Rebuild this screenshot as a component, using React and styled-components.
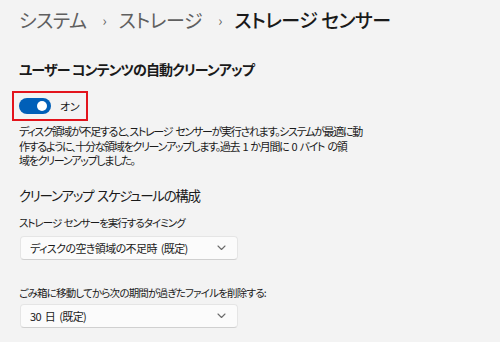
import React from "react";
import styled, { createGlobalStyle } from "styled-components";

const GlobalStyle = createGlobalStyle`
  html, body {
    margin: 0;
    padding: 0;
    background: #f3f3f3;
  }
  body {
    font-family: "Noto Sans CJK JP", "Noto Sans", sans-serif;
    font-feature-settings: "palt";
    color: #1b1b1b;
  }
`;

// ドロップダウンの矢印
const Chevron = () => (
  <svg width="9" height="6" viewBox="0 0 9 6">
    <polyline
      points="1,1 4.5,4.5 8,1"
      fill="none"
      stroke="#6b6b6b"
      strokeWidth="1.1"
      strokeLinecap="round"
      strokeLinejoin="round"
    />
  </svg>
);

const Dropdown = ({ children, tight }) => (
  <DropdownBox tight={tight}>
    <DropdownText>{children}</DropdownText>
    <Chevron />
  </DropdownBox>
);

const App = () => {
  return (
    <Page>
      <GlobalStyle />
      <Breadcrumb>
        <Crumb>システム</Crumb>
        <Separator>›</Separator>
        <Crumb>ストレージ</Crumb>
        <Separator>›</Separator>
        <Crumb current>ストレージ センサー</Crumb>
      </Breadcrumb>

      <SectionTitle>ユーザー コンテンツの自動クリーンアップ</SectionTitle>

      <ToggleFrame>
        <ToggleTrack>
          <ToggleKnob />
        </ToggleTrack>
        <ToggleLabel>オン</ToggleLabel>
      </ToggleFrame>

      <Description>
        ディスク領域が不足すると、ストレージ センサーが実行されます。システムが最適に動
        <br />
        作するように、十分な領域をクリーンアップします。過去 1 か月間に 0 バイト の領
        <br />
        域をクリーンアップしました。
      </Description>

      <SubTitle>クリーンアップ スケジュールの構成</SubTitle>

      <FieldLabel>ストレージ センサーを実行するタイミング</FieldLabel>
      <Dropdown>ディスクの空き領域の不足時 (既定)</Dropdown>

      <FieldLabel spaced>
        ごみ箱に移動してから次の期間が過ぎたファイルを削除する:
      </FieldLabel>
      <Dropdown tight>30 日 (既定)</Dropdown>
    </Page>
  );
};

export default App;

const Page = styled.main`
  width: 500px;
  height: 342px;
  box-sizing: border-box;
  padding: 6px 0 0 19px;
  overflow: hidden;
`;

const Breadcrumb = styled.nav`
  display: flex;
  align-items: center;
  height: 28px;
  font-size: 19px;
  line-height: 28px;
`;

const Crumb = styled.span`
  color: ${(props) => (props.current ? "#1a1a1a" : "#5f5f5f")};
  font-weight: ${(props) => (props.current ? 500 : 400)};
  letter-spacing: ${(props) => (props.current ? "-0.5px" : "-0.4px")};
  white-space: pre;
`;

const Separator = styled.span`
  color: #5f5f5f;
  font-size: 14px;
  margin: 0 12px 0 16px;
`;

const SectionTitle = styled.h2`
  margin: 25px 0 0;
  font-size: 14px;
  line-height: 20px;
  font-weight: 600;
  letter-spacing: -0.9px;
  color: #1a1a1a;
`;

const ToggleFrame = styled.div`
  display: flex;
  align-items: center;
  gap: 9px;
  width: 76px;
  height: 30px;
  box-sizing: border-box;
  margin: 12px 0 0 -7px;
  padding-left: 5px;
  border: 2px solid #e3141c;
`;

const ToggleTrack = styled.div`
  position: relative;
  width: 32px;
  height: 16px;
  border-radius: 8px;
  background: #005fb8;
`;

const ToggleKnob = styled.div`
  position: absolute;
  top: 3px;
  right: 4px;
  width: 10px;
  height: 10px;
  border-radius: 50%;
  background: #ffffff;
`;

const ToggleLabel = styled.span`
  font-size: 11px;
  letter-spacing: -0.3px;
  color: #1a1a1a;
`;

const Description = styled.p`
  margin: 3px 0 0;
  font-size: 11px;
  line-height: 14.5px;
  letter-spacing: -1.3px;
  word-spacing: 2px;
  color: #1a1a1a;
`;

const SubTitle = styled.h3`
  margin: 17px 0 0;
  font-size: 13.5px;
  line-height: 20px;
  font-weight: 400;
  letter-spacing: -1.3px;
  word-spacing: 2px;
  color: #1a1a1a;
`;

const FieldLabel = styled.div`
  margin-top: ${(props) => (props.spaced ? "25px" : "10px")};
  font-size: 10.5px;
  line-height: 16px;
  letter-spacing: ${(props) => (props.spaced ? "-0.8px" : "-1px")};
  word-spacing: 1px;
  color: #1a1a1a;
`;

const DropdownBox = styled.div`
  display: flex;
  align-items: center;
  justify-content: space-between;
  width: 218px;
  height: 24px;
  box-sizing: border-box;
  margin: ${(props) => (props.tight ? "3px" : "5px")} 0 0 1px;
  padding: 0 11px 0 9px;
  background: #fbfbfb;
  border: 1px solid #e5e5e5;
  border-bottom-color: #d0d0d0;
  border-radius: 4px;
`;

const DropdownText = styled.span`
  font-size: 11px;
  letter-spacing: -0.6px;
  word-spacing: 2px;
  color: #1a1a1a;
`;
